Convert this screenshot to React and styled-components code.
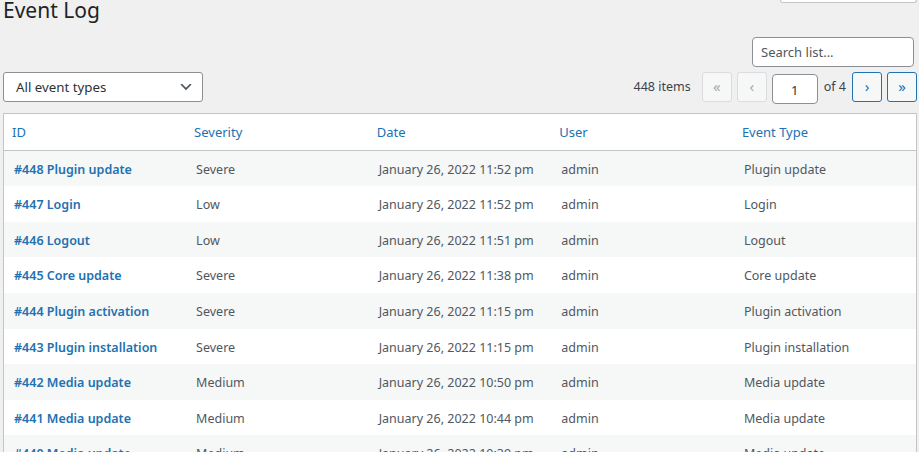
import React from "react";
import styled, { createGlobalStyle } from "styled-components";

const GlobalStyle = createGlobalStyle`
  html, body { margin: 0; padding: 0; background: #f0f0f1; }
  * { box-sizing: border-box; }
`;

const FONT = `"Noto Sans", "Open Sans", "Liberation Sans", sans-serif`;

const Wrap = styled.div`
  padding: 0 2px 0 3px;
  font-family: ${FONT};
  color: #3c434a;
  font-size: 12.5px;
  overflow: hidden;
  height: 452px;
`;

const TopBar = styled.div`
  display: flex;
  justify-content: space-between;
  align-items: flex-start;
`;

const Title = styled.h1`
  margin: -4px 0 0 0;
  font-size: 21px;
  line-height: 28px;
  font-weight: 400;
  color: #1d2327;
`;

const ScreenTab = styled.div`
  width: 137px;
  height: 3px;
  background: #fff;
  border: 1px solid #c3c4c7;
  border-top: none;
  border-radius: 0 0 4px 4px;
`;

const SearchRow = styled.div`
  display: flex;
  justify-content: flex-end;
  margin-top: 13px;
  padding-right: 3px;
`;

const SearchInput = styled.input`
  width: 162px;
  height: 30px;
  padding: 0 8px;
  border: 1px solid #8c8f94;
  border-radius: 4px;
  background: #fff;
  font-family: ${FONT};
  font-size: 13px;
  color: #2c3338;
  &::placeholder { color: #50575e; }
`;

const Tablenav = styled.div`
  display: flex;
  justify-content: space-between;
  align-items: flex-start;
  margin-top: 5px;
  height: 30px;
`;

const SelectBox = styled.div`
  width: 200px;
  height: 30px;
  display: flex;
  align-items: center;
  justify-content: space-between;
  padding: 0 8px 0 12px;
  background: #fff;
  border: 1px solid #8c8f94;
  border-radius: 3px;
  font-size: 13.3px;
  color: #2c3338;
`;

const Pages = styled.div`
  display: flex;
  align-items: flex-start;
  gap: 5px;
`;

const Count = styled.span`
  line-height: 30px;
  margin-right: 6px;
  color: #3c434a;
`;

const PageBtn = styled.span`
  width: 30px;
  height: 30px;
  display: flex;
  align-items: center;
  justify-content: center;
  border-radius: 3px;
  border: 1px solid ${(p) => (p.$disabled ? "#dcdcde" : "#2271b1")};
  background: #f6f7f7;
  color: ${(p) => (p.$disabled ? "#a7aaad" : "#2271b1")};
  font-size: 15px;
  line-height: 1;
  padding-bottom: 2px;
`;

const CurrentPage = styled.span`
  width: 46px;
  height: 30px;
  margin-top: 2px;
  display: flex;
  align-items: center;
  justify-content: center;
  background: #fff;
  border: 1px solid #8c8f94;
  border-radius: 4px;
  font-size: 13px;
  color: #2c3338;
  padding-top: 2px;
`;

const OfText = styled.span`
  line-height: 30px;
  margin: 0 1px 0 1px;
  color: #3c434a;
`;

const Table = styled.table`
  margin-top: 11px;
  width: 100%;
  table-layout: fixed;
  border-collapse: collapse;
  border: 1px solid #c3c4c7;
  background: #fff;
`;

const Th = styled.th`
  text-align: left;
  font-weight: 400;
  padding: 9px 8px 7px;
  font-size: 13px;
  line-height: 19.6px;
  color: #2271b1;
  border-bottom: 1px solid #c3c4c7;
`;

const Tr = styled.tr`
  background: ${(p) => (p.$alt ? "#f6f7f7" : "#fff")};
`;

const Td = styled.td`
  padding: 9px 10px 7px;
  font-size: 12.5px;
  line-height: 19.6px;
  color: #50575e;
  white-space: nowrap;
  overflow: hidden;
`;

const IdLink = styled.a`
  color: #2271b1;
  font-weight: 600;
  text-decoration: none;
`;

const Chevron = () => (
  <svg width="16" height="16" viewBox="0 0 20 20" aria-hidden="true">
    <path d="M5 6l5 5 5-5 2 1-7 7-7-7 2-1z" fill="#50575e" />
  </svg>
);

const rows = [
  [448, "Plugin update", "Severe", "11:52 pm"],
  [447, "Login", "Low", "11:52 pm"],
  [446, "Logout", "Low", "11:51 pm"],
  [445, "Core update", "Severe", "11:38 pm"],
  [444, "Plugin activation", "Severe", "11:15 pm"],
  [443, "Plugin installation", "Severe", "11:15 pm"],
  [442, "Media update", "Medium", "10:50 pm"],
  [441, "Media update", "Medium", "10:44 pm"],
  [440, "Media update", "Medium", "10:39 pm"],
  [439, "Media update", "Medium", "10:30 pm"],
];

export default function App() {
  return (
    <>
      <GlobalStyle />
      <Wrap>
        <TopBar>
          <Title>Event Log</Title>
          <ScreenTab />
        </TopBar>
        <SearchRow>
          <SearchInput placeholder="Search list..." />
        </SearchRow>
        <Tablenav>
          <SelectBox>
            <span>All event types</span>
            <Chevron />
          </SelectBox>
          <Pages>
            <Count>448 items</Count>
            <PageBtn $disabled>«</PageBtn>
            <PageBtn $disabled>‹</PageBtn>
            <CurrentPage>1</CurrentPage>
            <OfText>of 4</OfText>
            <PageBtn>›</PageBtn>
            <PageBtn>»</PageBtn>
          </Pages>
        </Tablenav>
        <Table>
          <thead>
            <tr>
              <Th>ID</Th>
              <Th>Severity</Th>
              <Th>Date</Th>
              <Th>User</Th>
              <Th>Event Type</Th>
            </tr>
          </thead>
          <tbody>
            {rows.map(([id, type, sev, time], i) => (
              <Tr key={id} $alt={i % 2 === 0}>
                <Td>
                  <IdLink href="#">#{id} {type}</IdLink>
                </Td>
                <Td>{sev}</Td>
                <Td>January 26, 2022 {time}</Td>
                <Td>admin</Td>
                <Td>{type}</Td>
              </Tr>
            ))}
          </tbody>
        </Table>
      </Wrap>
    </>
  );
}
